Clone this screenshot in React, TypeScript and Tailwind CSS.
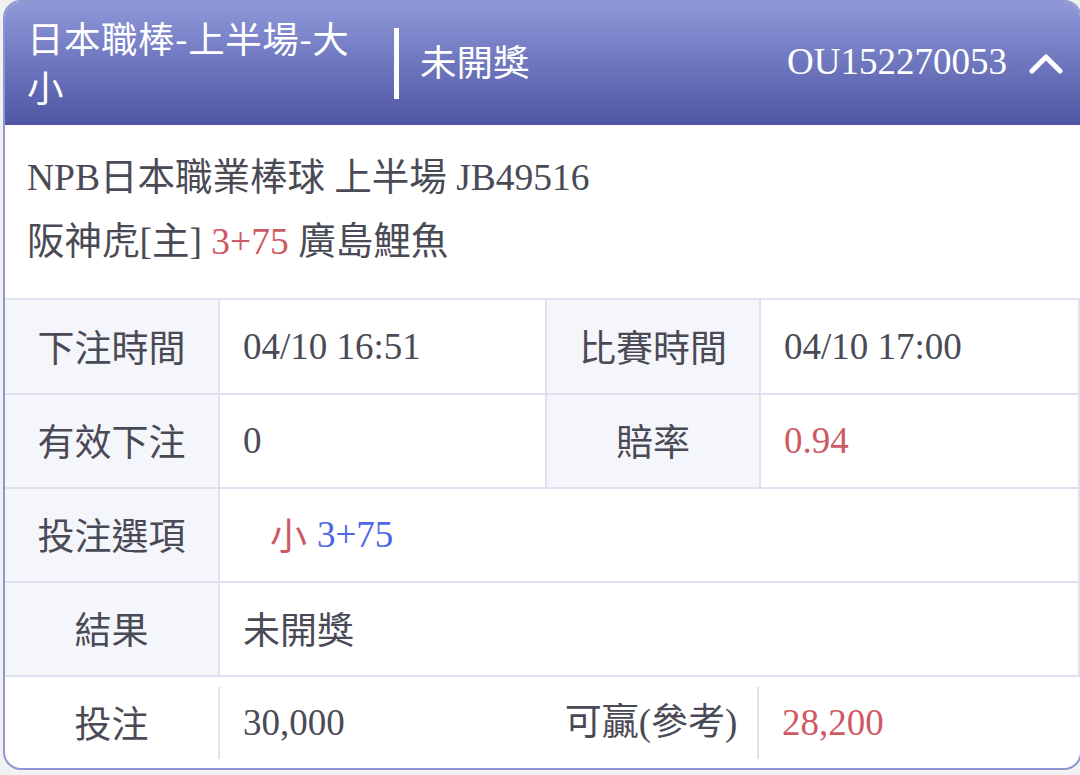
import React from "react";

const SERIF = "font-['Liberation_Serif','Noto_Sans_CJK_TC',serif]";

function Label({ children, w }: { children: React.ReactNode; w: string }) {
  return (
    <div className={`${w} shrink-0 h-full flex items-center justify-center bg-[#f5f6fb] border-r-2 border-[#dfe1f1] font-['Noto_Sans_CJK_TC',sans-serif] text-[37px] text-[#4a4a56]`}>
      {children}
    </div>
  );
}

function Value({ children, w }: { children: React.ReactNode; w: string }) {
  return (
    <div className={`${w} h-full flex items-center pl-[23px] border-r-2 border-[#dfe1f1] ${SERIF} text-[37px] text-[#4a4a56]`}>
      {children}
    </div>
  );
}

export default function App() {
  return (
    <div className="w-[1080px] h-[775px] bg-[#f1f1f4] overflow-hidden">
      <div className="ml-[3px] w-[1079px] h-[770px] rounded-[18px] border-2 border-[#9096cf] bg-white overflow-hidden flex flex-col">
        {/* Header */}
        <div className="h-[123px] shrink-0 bg-gradient-to-b from-[#8f98d8] to-[#4f56a4] flex items-center pl-[22px] pr-[17px] pb-[4px] text-white">
          <div className="w-[345px] font-['Noto_Sans_CJK_TC',sans-serif] text-[36.5px] leading-[49px] tracking-[0.5px]">
            日本職棒-上半場-大小
          </div>
          <div className="ml-[22px] mt-[4px] w-[5px] h-[71px] bg-white" />
          <div className="ml-[21px] font-['Noto_Sans_CJK_TC',sans-serif] text-[36.5px]">未開獎</div>
          <div className="flex-1" />
          <div className={`${SERIF} text-[37px]`}>OU152270053</div>
          <svg className="ml-[22px] mt-[2px]" width="34" height="24" viewBox="0 0 34 24" fill="none">
            <polyline points="3,20 17,6 31,20" stroke="white" strokeWidth="5" strokeLinecap="round" strokeLinejoin="round" />
          </svg>
        </div>

        {/* Info */}
        <div className={`h-[173px] shrink-0 pl-[22px] pt-[21px] ${SERIF} text-[37.5px] leading-[64px] text-[#4a4a56]`}>
          <div>NPB日本職業棒球 上半場 JB49516</div>
          <div>
            阪神虎[主] <span className="text-[#cf5963]">3+75</span> 廣島鯉魚
          </div>
        </div>

        {/* Table */}
        <div className="flex-1 flex flex-col">
          <div className="h-[95px] shrink-0 flex border-t-2 border-[#dfe1f1]">
            <Label w="w-[215px]">下注時間</Label>
            <Value w="w-[327px]">04/10 16:51</Value>
            <Label w="w-[214px]">比賽時間</Label>
            <Value w="flex-1 border-r-0">04/10 17:00</Value>
          </div>
          <div className="h-[94px] shrink-0 flex border-t-2 border-[#dfe1f1]">
            <Label w="w-[215px]">有效下注</Label>
            <Value w="w-[327px]">0</Value>
            <Label w="w-[214px]">賠率</Label>
            <Value w="flex-1 border-r-0">
              <span className="text-[#cf5963]">0.94</span>
            </Value>
          </div>
          <div className="h-[94px] shrink-0 flex border-t-2 border-[#dfe1f1]">
            <Label w="w-[215px]">投注選項</Label>
            <Value w="flex-1 border-r-0">
              <span className="pl-[27px] text-[#cf5963] font-['Noto_Sans_CJK_TC',sans-serif]">小</span>
              <span className="ml-[10px] text-[#4d67e4]">3+75</span>
            </Value>
          </div>
          <div className="h-[94px] shrink-0 flex border-t-2 border-[#dfe1f1]">
            <Label w="w-[215px]">結果</Label>
            <Value w="flex-1 border-r-0">
              <span className="font-['Noto_Sans_CJK_TC',sans-serif]">未開獎</span>
            </Value>
          </div>
          <div className="flex-1 flex items-center border-t-2 border-[#dfe1f1] text-[37px] text-[#4a4a56]">
            <div className="w-[213px] shrink-0 text-center font-['Noto_Sans_CJK_TC',sans-serif]">投注</div>
            <div className="w-[2px] h-[72px] bg-[#dfe1f1]" />
            <div className={`w-[325px] shrink-0 pl-[23px] ${SERIF}`}>30,000</div>
            <div className={`w-[212px] shrink-0 text-center ${SERIF}`}>可贏(參考)</div>
            <div className="w-[2px] h-[72px] bg-[#dfe1f1]" />
            <div className={`flex-1 pl-[23px] ${SERIF} text-[#cf5963]`}>28,200</div>
          </div>
        </div>
      </div>
    </div>
  );
}
